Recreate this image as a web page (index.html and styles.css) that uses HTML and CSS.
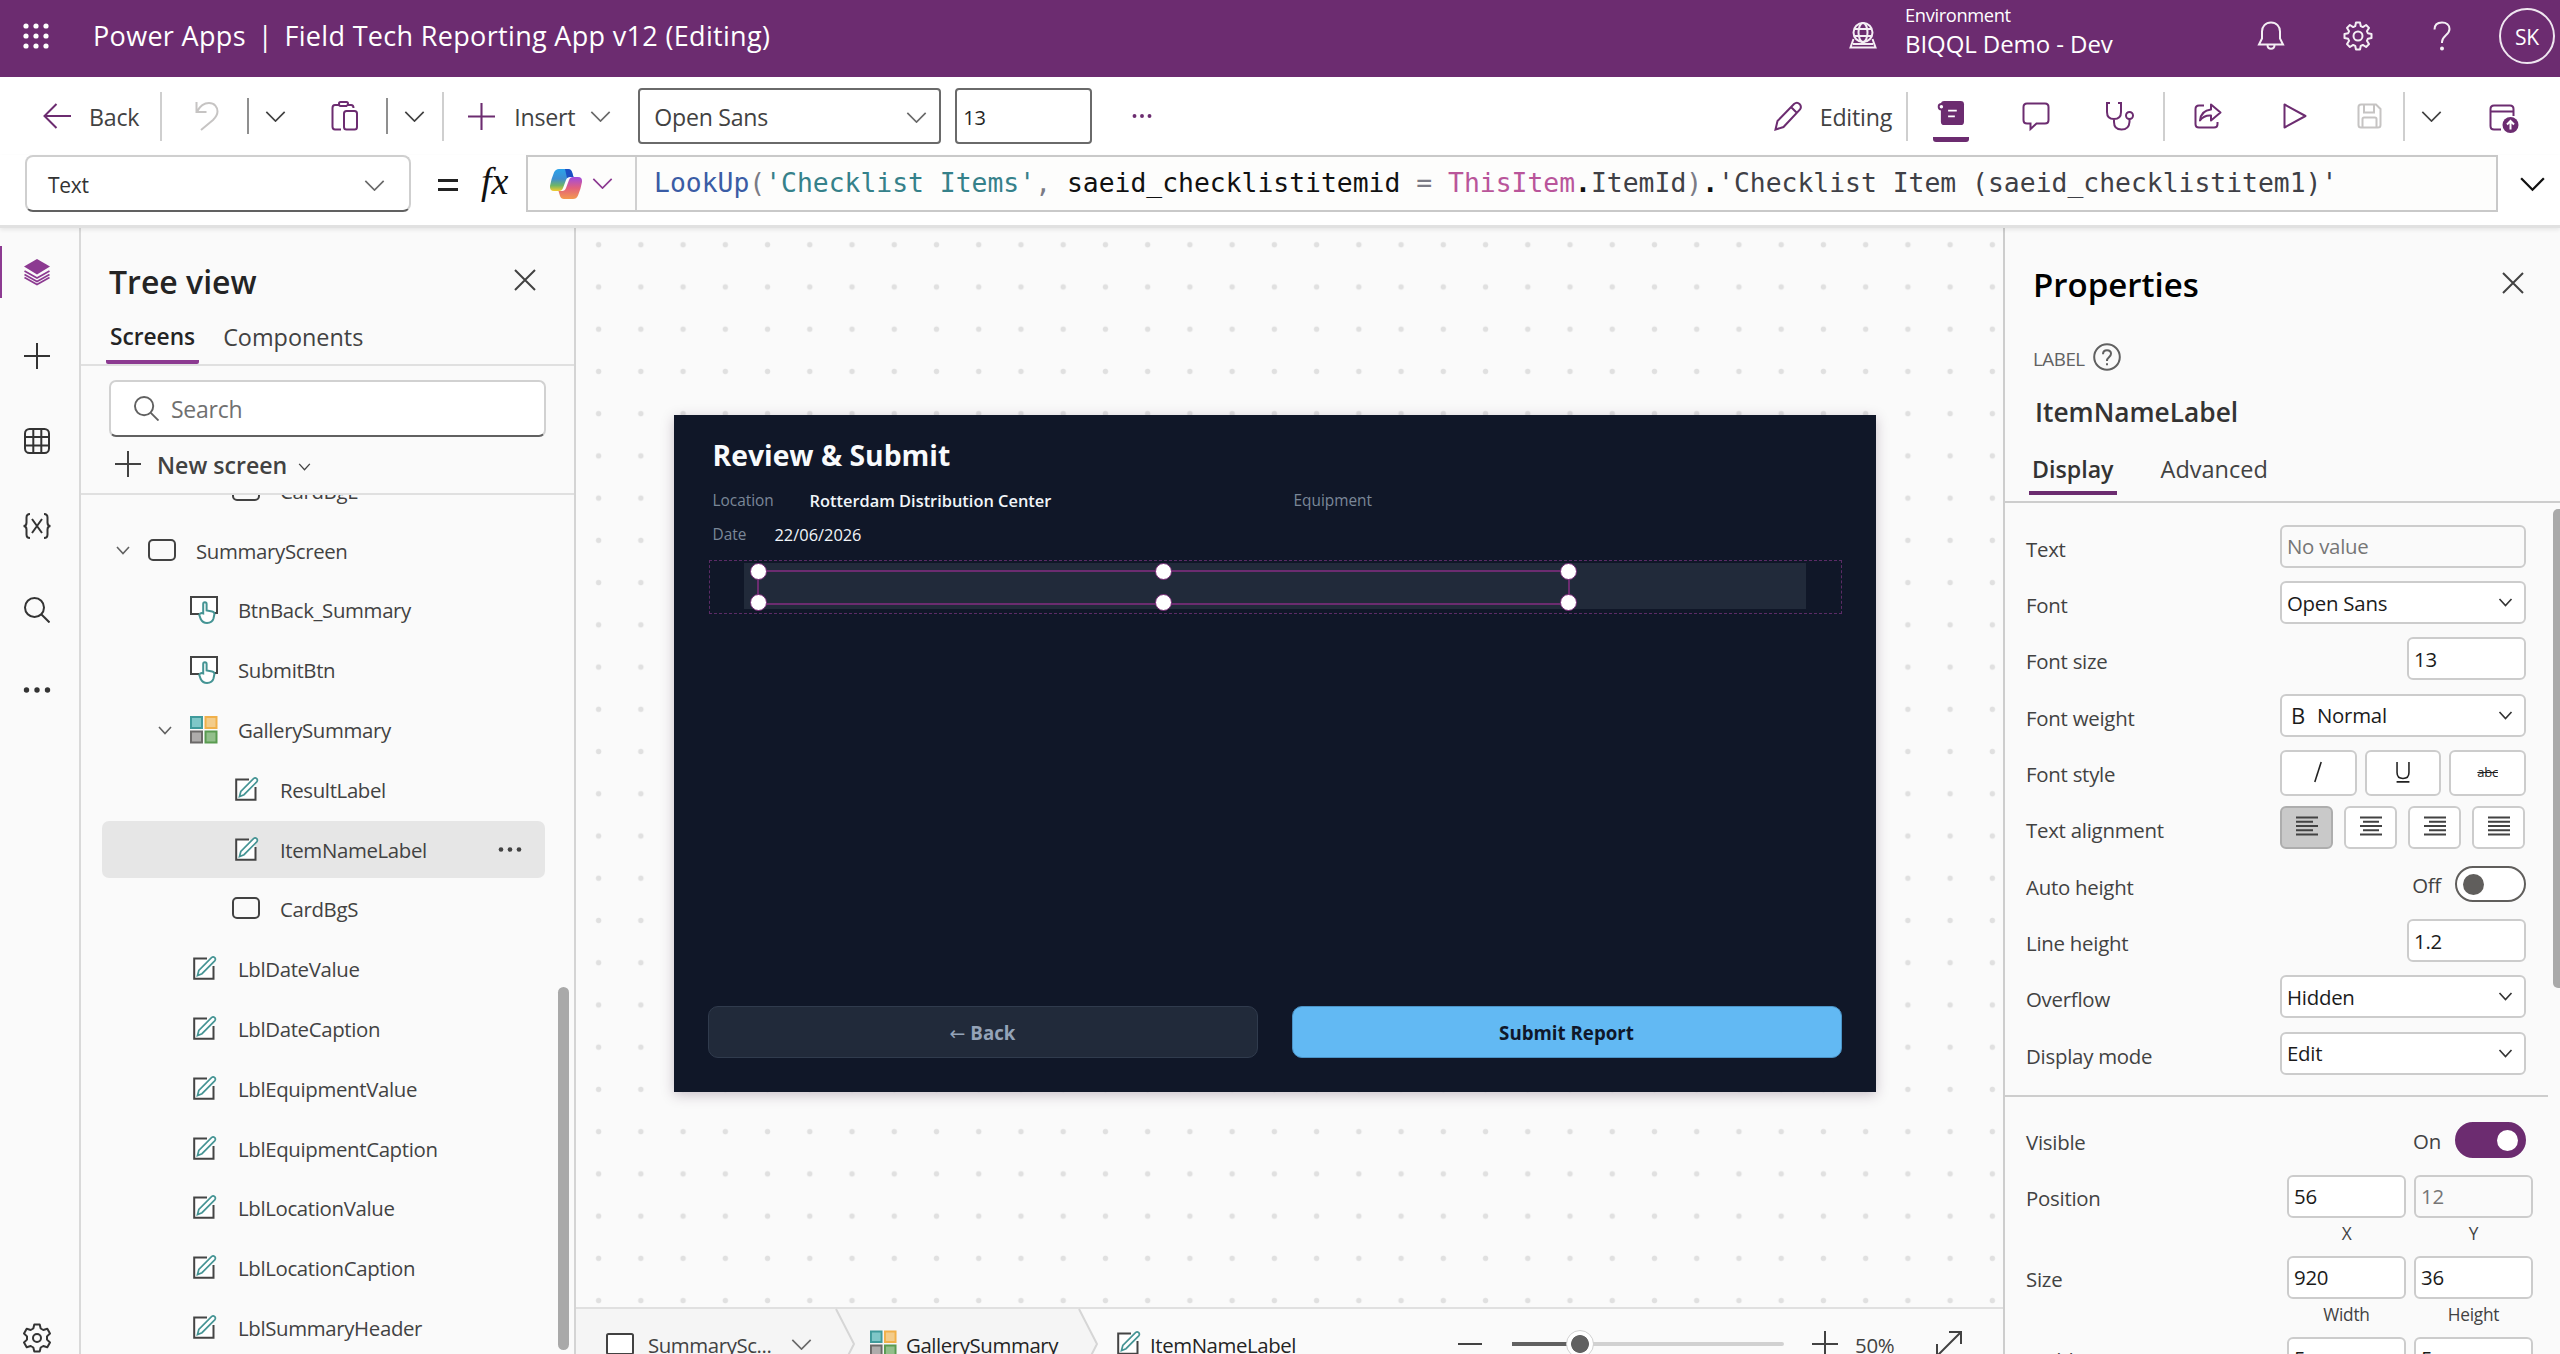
FILE: index.html
```html
<!DOCTYPE html>
<html lang="en">
<head>
  <meta charset="utf-8">
  <title>Power Apps | Field Tech Reporting App v12 (Editing)</title>
  <link rel="stylesheet" href="styles.css">
</head>
<body>

  <!-- shared icons -->
  <svg class="defs" width="0" height="0">
    <symbol id="chev" viewBox="0 0 22 12"><path d="M1 1l10 10L21 1"/></symbol>
    <symbol id="chev-sm" viewBox="0 0 14 9"><path d="M1 1l6 6.500L13 1"/></symbol>
    <symbol id="plus" viewBox="0 0 26 26"><path d="M13 0v26M0 13h26"/></symbol>
    <symbol id="close" viewBox="0 0 22 22"><path d="M1 1l20 20M21 1L1 21"/></symbol>
    <symbol id="search" viewBox="0 0 26 26"><circle cx="10.500" cy="10.500" r="9.500"/><path d="M17.500 17.500l8 8"/></symbol>
    <symbol id="dots" viewBox="0 0 28 8"><circle cx="3.500" cy="4" r="2.700"/><circle cx="14" cy="4" r="2.700"/><circle cx="24.500" cy="4" r="2.700"/></symbol>
    <symbol id="screen" viewBox="0 0 28 22"><rect x="1" y="1" width="26" height="20" rx="4"/></symbol>
    <symbol id="label" viewBox="0 0 24 24">
      <path d="M14 2.500H1.200V22.800H20.500V10" fill="#fff" stroke="#444"/>
      <path d="M4.500 19.500l1.300-5L18.500 1.600q1.700-1.300 3.200.1 1.400 1.500 0 3.200L9 17.700z" fill="#fff" stroke="#459494" stroke-width="1.700"/>
    </symbol>
    <symbol id="button" viewBox="0 0 28 28">
      <path d="M9 18H1V1h26v16h-3" fill="#fff" stroke="#444"/>
      <path d="M13.200 17.500V8q0-1.800 1.700-1.800T16.600 8v6.500l5.600 1q2.200.5 2.200 2.600l-.9 4.400q-1.200 4.300-6.500 4.500-4.300 0-6.300-4L9.300 19q.6-1.900 2.200-2z" fill="#fff" stroke="#459494"/>
    </symbol>
    <symbol id="gallery" viewBox="0 0 28 28">
      <path d="M1 1h11v11H1z" fill="#7fc7c8" stroke="#3f9a9b"/>
      <path d="M15.500 1h11v11h-11z" fill="#f3cc8a" stroke="#f0b04a"/>
      <path d="M1 15.500h11v11H1z" fill="#aeacab" stroke="#6b6968"/>
      <path d="M15.500 15.500h11v11h-11z" fill="#92bf8b" stroke="#599b50"/>
    </symbol>
    <symbol id="gear" viewBox="0 0 30 30">
      <path d="M12.300 1.500h5.400l1 4 2.600 1.500 4-1.200 2.700 4.700-3 2.900v3.200l3 2.900-2.700 4.700-4-1.200-2.600 1.500-1 4h-5.400l-1-4-2.600-1.500-4 1.200L2 19.500l3-2.900v-3.200l-3-2.900 2.700-4.700 4 1.200 2.600-1.500z" stroke-linejoin="round"/><circle cx="15" cy="15" r="4"/>
    </symbol>
    <symbol id="cog" viewBox="0 0 30 30">
      <path d="M13 1.500h4l.8 3.700 2 .9 3.300-2.100 2.900 2.900-2.100 3.300.9 2 3.700.8v4l-3.700.8-.9 2 2.100 3.300-2.900 2.900-3.300-2.100-2 .9-.8 3.700h-4l-.8-3.700-2-.9L6.900 26 4 23.100l2.100-3.300-.9-2L1.500 17v-4l3.700-.8.9-2L4 6.900 6.900 4l3.300 2.100 2-.9z" stroke-linejoin="round"/><circle cx="15" cy="15" r="4.500"/>
    </symbol>
  </svg>

  <header class="topbar">
    <svg class="waffle" viewBox="0 0 26 26">
      <circle cx="3" cy="3" r="2.600"/><circle cx="13" cy="3" r="2.600"/><circle cx="23" cy="3" r="2.600"/>
      <circle cx="3" cy="13" r="2.600"/><circle cx="13" cy="13" r="2.600"/><circle cx="23" cy="13" r="2.600"/>
      <circle cx="3" cy="23" r="2.600"/><circle cx="13" cy="23" r="2.600"/><circle cx="23" cy="23" r="2.600"/>
    </svg>
    <div class="brand">Power Apps</div>
    <div class="bar">|</div>
    <div class="brand">Field Tech Reporting App v12 (Editing)</div>
    <div class="spacer"></div>
    <svg class="ico w-globe" viewBox="0 0 28 27">
      <circle cx="14" cy="10.500" r="9.500"/><ellipse cx="14" cy="10.500" rx="4.500" ry="9.500"/><path d="M5 7h18M5 14h18M4.500 17L1.500 25.500h25L23.500 17M4 22h20"/>
    </svg>
    <div class="env">
      <div class="env-cap">Environment</div>
      <div class="env-name">BIQQL Demo - Dev</div>
    </div>
    <svg class="ico w-bell" viewBox="0 0 28 30"><path d="M14 1.500c-5.500 0-9 4-9 9v7L2 23.500h24l-3-6v-7c0-5-3.500-9-9-9zM10.500 24c0 5 7 5 7 0"/></svg>
    <svg class="ico w-cog"><use href="#cog"/></svg>
    <svg class="ico w-help" viewBox="0 0 18 30"><path d="M1.500 8.500C1.500 4 4.500 1.500 9 1.500s7.500 2.500 7.500 6.500c0 6-7.500 6.500-7.500 13v1"/><circle cx="9" cy="27.500" r="1"/></svg>
    <div class="avatar">SK</div>
  </header>

  <div class="toolbar">
    <svg class="ico purple w-back" viewBox="0 0 28 26"><path d="M28 13H1.500M13.500 1L1.500 13l12 12"/></svg>
    <span class="tb-text">Back</span>
    <i class="sep"></i>
    <svg class="ico faint w-undo" viewBox="0 0 24 30"><path d="M1.500 1v10h10M2 10.500C5 5 9 2 14 2c5.500 0 8.500 4 8.500 8.500 0 3.500-2 6-4.500 8.500L6 29"/></svg>
    <i class="sep short"></i>
    <svg class="ico chev c1"><use href="#chev"/></svg>
    <svg class="ico purple w-paste" viewBox="0 0 27 30"><path d="M8 4H4Q1.500 4 1.500 7v18.500q0 3 2.500 3h6M17 4h3q2.500 0 2.500 3M8 2.500q0-1.500 1.500-1.500h6Q17 1 17 2.500t-1.500 2.500h-6Q8 5 8 2.500z"/><rect x="13" y="10" width="13" height="18.500" rx="2.500"/></svg>
    <i class="sep short s2"></i>
    <svg class="ico chev c2"><use href="#chev"/></svg>
    <i class="sep s3"></i>
    <svg class="ico purple w-plus"><use href="#plus"/></svg>
    <span class="tb-text">Insert</span>
    <svg class="ico chev grey c3"><use href="#chev"/></svg>
    <div class="tb-box font-box"><span>Open Sans</span><svg class="ico chev grey"><use href="#chev"/></svg></div>
    <div class="tb-box size-box">13</div>
    <svg class="purple-fill w-more"><use href="#dots"/></svg>
    <div class="spacer"></div>
    <svg class="ico purple w-pencil" viewBox="0 0 28 30"><path d="M1.500 28.500l2-8.500L20 3q3-2.500 5.500 0t.5 5.500L9.500 26zM17 6l6 6"/></svg>
    <span class="tb-text">Editing</span>
    <i class="sep e1"></i>
    <div class="active-tool">
      <svg viewBox="0 0 28 27"><rect class="solid" x="3.500" y="1" width="24" height="25" rx="3.500"/><circle class="ring" cx="4" cy="7" r="2.800"/><path class="cut" d="M11 11h9M11 17h7"/></svg>
    </div>
    <svg class="ico purple w-comment" viewBox="0 0 28 28"><path d="M5 1.500h18q3.500 0 3.500 3.500v13q0 3.500-3.500 3.500h-8.500L8.500 27v-5.500H5q-3.500 0-3.500-3.500V5q0-3.500 3.500-3.500z"/></svg>
    <svg class="ico purple w-steth" viewBox="0 0 30 29"><path d="M5 1H2v9q0 7 7 7t7-7V1h-3M9 17v3q0 7.500 7.500 7.500T24.500 20v-3"/><circle cx="24.500" cy="13.500" r="3.500"/></svg>
    <i class="sep e2"></i>
    <svg class="ico purple w-share" viewBox="0 0 28 26"><path d="M10 2.500H5Q1.500 2.500 1.500 6v15q0 3.500 3.500 3.500h15q3.500 0 3.500-3.500v-2M17 1.500l9.500 8-9.500 8v-5q-7-.5-11 5 1-10 11-11z" stroke-linejoin="round"/></svg>
    <svg class="ico purple w-play" viewBox="0 0 24 26"><path d="M1.500 1.500v23L22.500 13z" stroke-linejoin="round"/></svg>
    <svg class="ico faint w-save" viewBox="0 0 25 26"><path d="M4 1.500h15l4.500 4.500v16q0 2.500-2.500 2.500H4Q1.500 24.500 1.500 22V4Q1.500 1.500 4 1.500zM7 1.500v8h10v-8M5.500 24V16q0-1.500 1.500-1.500h11q1.500 0 1.500 1.500v8"/></svg>
    <i class="sep e3"></i>
    <svg class="ico chev c4"><use href="#chev"/></svg>
    <svg class="ico purple w-publish" viewBox="0 0 30 29"><path d="M12 25.500H5Q1.500 25.500 1.500 22V5Q1.500 1.500 5 1.500h16q3.500 0 3.500 3.500v7M1.500 7.500h23"/><circle class="solid" cx="21.500" cy="21" r="8"/><path class="cut" d="M21.500 25.500v-8.500M18 20.500l3.500-3.500 3.500 3.500"/></svg>
  </div>

  <div class="formula">
    <div class="prop-select"><span>Text</span><svg class="ico chev grey"><use href="#chev"/></svg></div>
    <svg class="equals" viewBox="0 0 20 14"><path d="M0 2.500h20M0 11.500h20"/></svg>
    <span class="fx">fx</span>
    <div class="fbox">
      <div class="copilot">
        <svg class="copilot-logo" viewBox="0 0 32 30">
          <defs>
            <linearGradient id="ga" x1="0" y1="0" x2="0" y2="1"><stop offset="0" stop-color="#2aa3ea"/><stop offset=".45" stop-color="#3f8ed0"/><stop offset=".75" stop-color="#6fb567"/><stop offset="1" stop-color="#f4cb2e"/></linearGradient>
            <linearGradient id="gb" x1="0" y1="0" x2="0" y2="1"><stop offset="0" stop-color="#a04be0"/><stop offset=".5" stop-color="#e2607d"/><stop offset="1" stop-color="#f39a4e"/></linearGradient>
          </defs>
          <path d="M9 0h9q3 0 4 3l1.500 5H20q-3 0-4 3l-3 8q-1 3-4 3H4q-4.500 0-4-5Q1.500 9 4 3.500 5.500 0 9 0z" fill="url(#ga)"/>
          <path d="M15 0h3q3 0 4 3l1.500 5H20q-2 0-3 1z" fill="#1d4fc4"/>
          <path d="M23 30h-9q-3 0-4-3l-1.500-5H12q3 0 4-3l3-8q1-3 4-3h5q4.500 0 4 5-1.500 8-4 13.500Q26.500 30 23 30z" fill="url(#gb)"/>
        </svg>
        <svg class="ico chev violet"><use href="#chev"/></svg>
      </div>
      <code><span class="fn">LookUp</span><span class="pn">(</span><span class="str">'Checklist Items'</span><span class="pn">,</span> <span class="id">saeid_checklistitemid</span> <span class="pn">=</span> <span class="kw">ThisItem</span><b>.</b>ItemId<span class="pn">)</span><b>.</b>'Checklist Item (saeid_checklistitem1)'</code>
    </div>
    <svg class="ico expand" viewBox="0 0 22 12"><path d="M1 1l10 10L21 1"/></svg>
  </div>

  <main class="work">

    <nav class="rail">
      <div class="rail-item on"><svg viewBox="0 0 26 26"><path class="solid" d="M13 0l13 7.500L13 15.500 0 7.500z"/><path d="M.5 12L13 19l12.500-7M.5 15.500L13 22.500l12.500-7M.5 18.500L13 25.500l12.500-7"/></svg></div>
      <div class="rail-item"><svg><use href="#plus"/></svg></div>
      <div class="rail-item"><svg viewBox="0 0 26 26"><rect x="1" y="1" width="24" height="24" rx="4.500"/><path d="M9.300 1v24M17.300 1v24M1 9h24M1 17.500h24"/></svg></div>
      <div class="rail-item"><svg class="vars" viewBox="0 0 28 26"><path d="M7 1Q3.500 1 3.500 4.500v5Q3.500 13 .5 13q3 0 3 3.500v5Q3.500 25 7 25M21 1q3.500 0 3.500 3.500v5q0 3.500 3 3.500-3 0-3 3.500v5Q24.500 25 21 25M9 6l10 14M19 6L9 20"/></svg></div>
      <div class="rail-item"><svg><use href="#search"/></svg></div>
      <div class="rail-item rail-dots"><svg><use href="#dots"/></svg></div>
      <div class="rail-gear"><svg><use href="#gear"/></svg></div>
    </nav>

    <section class="tree">
      <div class="tree-title"><h2>Tree view</h2><svg class="ico w-close"><use href="#close"/></svg></div>
      <div class="tabs"><span class="tab on">Screens</span><span class="tab">Components</span></div>
      <div class="search"><svg class="ico"><use href="#search"/></svg><span>Search</span></div>
      <div class="new-screen"><svg class="ico"><use href="#plus"/></svg><span>New screen</span><svg class="ico sm"><use href="#chev-sm"/></svg></div>
      <div class="tree-list">
        <div class="node l2 first"><svg class="i-screen"><use href="#screen"/></svg>CardBgE</div>
        <div class="node l0"><svg class="tw"><use href="#chev-sm"/></svg><svg class="i-screen"><use href="#screen"/></svg>SummaryScreen</div>
        <div class="node l1"><svg class="i-28"><use href="#button"/></svg>BtnBack_Summary</div>
        <div class="node l1"><svg class="i-28"><use href="#button"/></svg>SubmitBtn</div>
        <div class="node l1"><svg class="tw"><use href="#chev-sm"/></svg><svg class="i-28"><use href="#gallery"/></svg>GallerySummary</div>
        <div class="node l2"><svg class="i-label"><use href="#label"/></svg>ResultLabel</div>
        <div class="node l2 selected"><svg class="i-label"><use href="#label"/></svg>ItemNameLabel<svg class="node-more"><use href="#dots"/></svg></div>
        <div class="node l2"><svg class="i-screen"><use href="#screen"/></svg>CardBgS</div>
        <div class="node l1"><svg class="i-label"><use href="#label"/></svg>LblDateValue</div>
        <div class="node l1"><svg class="i-label"><use href="#label"/></svg>LblDateCaption</div>
        <div class="node l1"><svg class="i-label"><use href="#label"/></svg>LblEquipmentValue</div>
        <div class="node l1"><svg class="i-label"><use href="#label"/></svg>LblEquipmentCaption</div>
        <div class="node l1"><svg class="i-label"><use href="#label"/></svg>LblLocationValue</div>
        <div class="node l1"><svg class="i-label"><use href="#label"/></svg>LblLocationCaption</div>
        <div class="node l1"><svg class="i-label"><use href="#label"/></svg>LblSummaryHeader</div>
        <div class="tree-scroll"></div>
      </div>
    </section>

    <section class="stage">
      <div class="canvas">
        <div class="app">
          <div class="a-title">Review &amp; Submit</div>
          <div class="a-cap loc-cap">Location</div>
          <div class="a-val loc-val">Rotterdam Distribution Center</div>
          <div class="a-cap eq-cap">Equipment</div>
          <div class="a-cap date-cap">Date</div>
          <div class="a-val date-val">22/06/2026</div>
          <div class="card"></div>
          <div class="gallery"></div>
          <div class="selection">
            <i class="h tl"></i><i class="h tc"></i><i class="h tr"></i>
            <i class="h bl"></i><i class="h bc"></i><i class="h br"></i>
          </div>
          <div class="a-btn back"><span class="larr">←</span> Back</div>
          <div class="a-btn submit">Submit Report</div>
        </div>
      </div>
      <footer class="status">
        <div class="crumb c-screen"><svg class="i-box" viewBox="0 0 28 22"><rect x="1" y="1" width="26" height="20" rx="1.500"/></svg><span>SummarySc...</span><svg class="ico chev grey"><use href="#chev"/></svg></div>
        <svg class="arrow mid" viewBox="0 0 20 70"><path d="M1 0l18 35L1 70"/></svg>
        <div class="crumb c-gallery"><svg class="i-28"><use href="#gallery"/></svg><span>GallerySummary</span></div>
        <svg class="arrow" viewBox="0 0 20 70"><path class="bg" d="M0 0h1l18 35L1 70H0z"/><path d="M1 0l18 35L1 70"/></svg>
        <div class="crumb c-item"><svg class="i-label"><use href="#label"/></svg><span>ItemNameLabel</span></div>
        <div class="spacer"></div>
        <div class="zoom">
          <i class="minus"></i>
          <div class="track"><div class="fill"></div><div class="thumb"></div></div>
          <svg class="ico"><use href="#plus"/></svg>
          <span>50%</span>
          <svg class="ico fit" viewBox="0 0 26 26"><path d="M1 25L25 1M13 1h12v12M1 13v12h12"/></svg>
        </div>
      </footer>
    </section>

    <aside class="props">
      <div class="p-title"><h2>Properties</h2><svg class="ico w-close"><use href="#close"/></svg></div>
      <div class="p-kind"><span>LABEL</span><svg class="ico" viewBox="0 0 28 28"><circle cx="14" cy="14" r="12.800"/><path d="M10 11.200q0-4 4-4t4 3.600c0 3.200-4 3.600-4 6.700v.5M14 20.300v2"/></svg></div>
      <div class="p-name">ItemNameLabel</div>
      <div class="p-tabs"><span class="p-tab on">Display</span><span class="p-tab">Advanced</span></div>
      <div class="p-body">
        <div class="row"><label>Text</label><div class="ctl wide off">No value</div></div>
        <div class="row"><label>Font</label><div class="ctl wide">Open Sans<svg><use href="#chev-sm"/></svg></div></div>
        <div class="row"><label>Font size</label><div class="ctl num">13</div></div>
        <div class="row"><label>Font weight</label><div class="ctl wide"><b class="bold-b">B</b>Normal<svg><use href="#chev-sm"/></svg></div></div>
        <div class="row"><label>Font style</label>
          <div class="styles">
            <div class="sbtn"><svg viewBox="0 0 24 24"><path d="M8.500 23L15.500 1"/></svg></div>
            <div class="sbtn"><svg viewBox="0 0 24 24"><path d="M5.500 1v11.500q0 6.500 6.500 6.500t6.500-6.500V1M5 22.800h14"/></svg></div>
            <div class="sbtn"><s>abc</s></div>
          </div>
        </div>
        <div class="row"><label>Text alignment</label>
          <div class="aligns">
            <div class="abtn on"><svg viewBox="0 0 22 20"><path d="M0 1.500h22M0 5.800h17M0 10h22M0 14.200h17M0 18.500h22"/></svg></div>
            <div class="abtn"><svg viewBox="0 0 22 20"><path d="M0 1.500h22M3 5.800h16M0 10h22M3 14.200h16M0 18.500h22"/></svg></div>
            <div class="abtn"><svg viewBox="0 0 22 20"><path d="M0 1.500h22M5 5.800h17M0 10h22M5 14.200h17M0 18.500h22"/></svg></div>
            <div class="abtn"><svg viewBox="0 0 22 20"><path d="M0 1.500h22M0 5.800h22M0 10h22M0 14.200h22M0 18.500h22"/></svg></div>
          </div>
        </div>
        <div class="row"><label>Auto height</label><span class="t-text">Off</span><div class="toggle"></div></div>
        <div class="row"><label>Line height</label><div class="ctl num">1.2</div></div>
        <div class="row"><label>Overflow</label><div class="ctl wide">Hidden<svg><use href="#chev-sm"/></svg></div></div>
        <div class="row"><label>Display mode</label><div class="ctl wide">Edit<svg><use href="#chev-sm"/></svg></div></div>
        <hr>
        <div class="row"><label>Visible</label><span class="t-text">On</span><div class="toggle on"></div></div>
        <div class="row pair"><label>Position</label>
          <div class="cell"><div class="ctl num">56</div><small>X</small></div>
          <div class="cell"><div class="ctl num off">12</div><small>Y</small></div>
        </div>
        <div class="row pair"><label>Size</label>
          <div class="cell"><div class="ctl num">920</div><small>Width</small></div>
          <div class="cell"><div class="ctl num">36</div><small>Height</small></div>
        </div>
        <div class="row pair"><label>Padding</label>
          <div class="cell"><div class="ctl num">5</div></div>
          <div class="cell"><div class="ctl num">5</div></div>
        </div>
        <div class="p-scroll"></div>
      </div>
    </aside>

  </main>

</body>
</html>
```
FILE: styles.css
```css
* {
  box-sizing: border-box;
}
body {
  margin: 0;
  width: 2560px;
  height: 1354px;
  overflow: hidden;
  display: flex;
  flex-direction: column;
  font-family: "Open Sans", "Noto Sans", sans-serif;
  font-size: 20.4px;
  letter-spacing: -0.012em;
  color: #424242;
  background-color: #fff;
}
h2 {
  margin: 0;
}
svg {
  flex: none;
  overflow: visible;
  fill: none;
  stroke: #424242;
  stroke-width: 2;
}
.defs {
  position: absolute;
}
.spacer {
  flex: 1;
}
.ico { stroke: #424242; }
.ico.purple { stroke: #6c2c70; }
.ico.faint { stroke: #c6c4c3; }
.ico.grey { stroke: #6a6a6a; }
.ico.violet { stroke: #8c3a91; }
.chev {
  width: 21px;
  height: 11px;
  stroke-width: 1.8;
}

/* top bar */
.topbar {
  flex: none;
  height: 77px;
  padding: 0 5px 6px 23px;
  display: flex;
  align-items: center;
  background-color: #6c2c70;
  color: #fff;
}
.topbar .ico {
  stroke: #f4eef4;
}
.waffle {
  width: 26px;
  height: 26px;
  fill: #fff;
  stroke: none;
  margin-right: 44px;
}
.brand {
  font-size: 27px;
  font-weight: 500;
  letter-spacing: 0.012em;
}
.bar {
  font-size: 27px;
  margin: 0 12px 0 12px;
}
.w-globe {
  width: 28px;
  height: 27px;
  margin-right: 28px;
}
.env {
  width: 352px;
  align-self: flex-start;
}
.env-cap {
  font-size: 18.3px;
  line-height: 30px;
  letter-spacing: -0.02em;
}
.env-name {
  font-size: 24px;
  line-height: 28px;
  letter-spacing: -0.003em;
}
.w-bell { width: 28px; height: 30px; margin-right: 58px; }
.w-cog { width: 30px; height: 30px; margin-right: 60px; }
.w-help { width: 18px; height: 30px; margin-right: 48px; }
.avatar {
  width: 56px;
  height: 56px;
  border: 2px solid #efe6f0;
  border-radius: 50%;
  text-align: center;
  line-height: 55px;
  font-size: 21px;
}

/* command bar */
.toolbar {
  flex: none;
  height: 78px;
  padding-left: 43px;
  padding-right: 41px;
  display: flex;
  align-items: center;
}
.tb-text {
  font-size: 23.2px;
  letter-spacing: -0.01em;
  line-height: 32px;
  padding-top: 2px;
}
.sep {
  width: 2px;
  height: 49px;
  background-color: #cfcfcf;
  margin-left: 21px;
}
.sep.short {
  height: 36px;
  background-color: #8f8f8f;
  margin-left: 28px;
}
.w-back { width: 28px; height: 26px; margin-right: 18px; }
.w-undo { width: 24px; height: 30px; margin-left: 33px; }
.c1 { margin-left: 16px; }
.w-paste { width: 27px; height: 30px; margin-left: 45px; }
.toolbar .c2 { margin-left: 16px; }
.toolbar .s3 { margin-left: 17px; }
.w-plus { width: 27px; height: 27px; margin: 0 19px 0 24px; }
.c3 { margin-left: 15px; }
.tb-box {
  height: 56px;
  border: 2px solid #6a6a6a;
  border-radius: 4px;
  display: flex;
  align-items: center;
  justify-content: space-between;
}
.font-box {
  width: 303px;
  margin-left: 27px;
  padding: 2px 12px 0 14px;
  font-size: 23.1px;
}
.size-box {
  width: 137px;
  margin-left: 14px;
  padding: 2px 0 0 6px;
  font-size: 20px;
  color: #242424;
}
.w-more {
  width: 20px;
  height: 6px;
  margin-left: 40px;
  fill: #6c2c70;
  stroke: none;
}
.w-pencil { width: 28px; height: 30px; margin-right: 18px; }
.e1 { margin-left: 14px; }
.active-tool {
  width: 36px;
  height: 42px;
  margin-left: 25px;
  margin-top: 10px;
  border-bottom: 5px solid #6c2c70;
  border-radius: 3px;
}
.active-tool svg {
  display: block;
  width: 28px;
  height: 26px;
  margin: 0 auto;
  stroke: #6c2c70;
}
.solid { fill: #6c2c70; stroke: none; }
.cut { stroke: #fff; }
.ring { fill: #fff; }
.w-comment { width: 28px; height: 28px; margin-left: 53px; }
.w-steth { width: 30px; height: 29px; margin-left: 55px; }
.e2 { margin-left: 28px; }
.w-share { width: 28px; height: 26px; margin-left: 29px; }
.w-play { width: 24px; height: 26px; margin-left: 61px; }
.w-save { width: 25px; height: 26px; margin-left: 50px; }
.c4 { margin-left: 16px; }
.w-publish { width: 30px; height: 29px; margin-left: 47px; margin-top: 4px; }

/* formula bar */
.formula {
  flex: none;
  position: relative;
  z-index: 2;
  height: 73px;
  padding-left: 25px;
  display: flex;
  align-items: flex-start;
  border-bottom: 3px solid #e1e1e1;
  box-shadow: 0 2px 4px rgba(0, 0, 0, 0.08);
  background-color: #fff;
}
.prop-select {
  width: 386px;
  height: 57px;
  padding: 3px 24px 0 21px;
  display: flex;
  align-items: center;
  justify-content: space-between;
  border: 2px solid #cfcfcf;
  border-bottom-color: #616161;
  border-radius: 8px;
  font-size: 21px;
  color: #333;
}
.equals {
  width: 20px;
  height: 14px;
  margin: 23px 23px 0 27px;
  stroke: #222;
  stroke-width: 3;
}
.fx {
  width: 45px;
  font: italic 38px/52px "Liberation Serif", serif;
  letter-spacing: 0;
  color: #111;
}
.fbox {
  width: 1972px;
  height: 57px;
  display: flex;
  align-items: stretch;
  border: 2px solid #c9c9c9;
  background-color: #fdfdfc;
}
.copilot {
  width: 109px;
  padding-left: 22px;
  display: flex;
  align-items: center;
  gap: 10px;
  border-right: 2px solid #d0d0d0;
}
.copilot-logo {
  width: 32px;
  height: 30px;
  stroke: none;
}
code {
  padding-left: 17px;
  font: 26.38px/52px "DejaVu Sans Mono", monospace;
  letter-spacing: 0;
  white-space: pre;
  color: #3f4046;
}
.fn { color: #3a5ca5; }
.str { color: #35818a; }
.pn { color: #7b7b85; }
.id { color: #111; }
.kw { color: #b9559a; }
code b { color: #111; }
.expand {
  width: 25px;
  height: 14px;
  margin: 22px 0 0 22px;
  stroke: #111;
}

.work {
  flex: 1;
  min-height: 0;
  display: flex;
  background-color: #fafafa;
}

/* left rail */
.rail {
  position: relative;
  width: 81px;
  padding-top: 3px;
  border-right: 2px solid #d9d9d9;
}
.rail-item {
  height: 84.7px;
  padding-right: 5px;
  display: flex;
  align-items: center;
  justify-content: center;
}
.rail-item svg {
  width: 26px;
  height: 26px;
  stroke: #333;
}
.rail-item svg.vars {
  width: 28px;
}
.rail-item.on {
  box-shadow: inset 2px 0 #8c3a91;
  height: 52px;
  margin: 15px 0 16px;
}
.rail-item.on svg {
  stroke: #8c3a91;
  stroke-width: 1.7;
}
.rail-item.on .solid {
  fill: #8c3a91;
}
.rail-dots {
  height: 74px;
}
.rail-dots svg {
  width: 28px;
  height: 8px;
  fill: #333;
  stroke: none;
}
.rail-gear {
  position: absolute;
  left: 22px;
  bottom: 0;
  height: 31px;
}
.rail-gear svg {
  width: 30px;
  height: 30px;
  stroke: #333;
}

/* tree view */
.tree {
  width: 495px;
  display: flex;
  flex-direction: column;
  border-right: 2px solid #d4d4d4;
}
.tree-title {
  height: 81px;
  padding: 26px 38px 0 28px;
  display: flex;
  align-items: center;
  justify-content: space-between;
  color: #242424;
}
.tree-title h2 {
  font-size: 32px;
  font-weight: 600;
  letter-spacing: 0;
}
.w-close {
  width: 22px;
  height: 22px;
  margin-top: -3px;
}
.tabs {
  height: 57px;
  padding-left: 25px;
  display: flex;
  gap: 20px;
  border-bottom: 2px solid #e0e0e0;
}
.tab {
  padding: 10px 4px 0;
  font-size: 23.4px;
  line-height: 36px;
  letter-spacing: 0;
}
.tab.on {
  height: 55px;
  font-size: 22.7px;
  font-weight: 600;
  color: #242424;
  border-bottom: 4px solid #8c3a91;
  border-radius: 2px;
}
.search {
  flex: none;
  width: 437px;
  height: 57px;
  margin: 14px 0 0 28px;
  padding-left: 23px;
  display: flex;
  align-items: center;
  gap: 12px;
  border: 2px solid #d1d1d1;
  border-bottom-color: #616161;
  border-radius: 7px;
  background-color: #fff;
  font-size: 23px;
  color: #707070;
}
.search svg {
  width: 25px;
  height: 25px;
  stroke: #616161;
}
.new-screen {
  flex: none;
  height: 58px;
  padding-left: 34px;
  display: flex;
  align-items: center;
  font-size: 23.1px;
  font-weight: 600;
  letter-spacing: 0;
  border-bottom: 2px solid #e0e0e0;
}
.new-screen svg {
  width: 26px;
  height: 26px;
  margin: -2px 16px 0 0;
}
.new-screen svg.sm {
  width: 13px;
  height: 8px;
  margin: 3px 0 0 11px;
  stroke-width: 1.5;
}
.tree-list {
  position: relative;
  flex: 1;
  min-height: 0;
  overflow: hidden;
}
.node {
  height: 59.8px;
  margin: 0 29px 0 21px;
  display: flex;
  align-items: center;
  letter-spacing: -0.017em;
}
.node.first {
  margin-top: -34px;
}
.node svg {
  flex: none;
}
.l0 { padding-left: 14px; }
.l1 { padding-left: 88px; }
.l2 { padding-left: 130px; }
.node .tw {
  width: 14px;
  height: 9px;
  stroke: #616161;
  stroke-width: 1.6;
}
.l0 .tw { margin-right: 18px; }
.l1 .tw { margin: 0 18px 0 -32px; }
.i-screen {
  width: 28px;
  height: 22px;
  margin: -2px 20px 0 0;
}
.i-28 {
  width: 28px;
  height: 28px;
  margin: -1px 20px 0 0;
}
.i-label {
  width: 24px;
  height: 24px;
  margin: -2px 21px 0 3px;
}
.node.selected {
  height: 57px;
  margin-top: 1.4px;
  margin-bottom: 1.4px;
  border-radius: 7px;
  background-color: #e6e6e6;
}
.node .node-more {
  width: 24px;
  height: 7px;
  margin-left: auto;
  margin-right: 23px;
  fill: #424242;
  stroke: none;
}
.tree-scroll {
  position: absolute;
  right: 5px;
  top: 492px;
  width: 11px;
  height: 363px;
  border-radius: 6px;
  background-color: #a9a9a9;
}

/* canvas */
.stage {
  flex: 1;
  display: flex;
  flex-direction: column;
}
.canvas {
  position: relative;
  flex: none;
  height: 1079px;
  background-color: #fafafa;
  background-image: radial-gradient(circle at center, #e0e0e0 2.2px, transparent 3.2px);
  background-size: 42.24px 42.24px;
  background-position: 1.5px -4.400px;
}
.app {
  position: absolute;
  left: 97.500px;
  top: 187px;
  width: 1202.500px;
  height: 677px;
  background-color: #101728;
  box-shadow: 0 3px 12px rgba(60, 30, 60, 0.26);
}
.app > div {
  position: absolute;
  white-space: nowrap;
}
.a-title {
  left: 39px;
  top: 20px;
  font-size: 28.3px;
  line-height: 40px;
  font-weight: 700;
  letter-spacing: 0;
  color: #f8fafc;
}
.a-cap, .a-val {
  line-height: 20px;
  letter-spacing: 0;
}
.a-cap {
  font-size: 15.4px;
  color: #7b8798;
}
.a-val {
  font-size: 16.4px;
  color: #f1f5f9;
}
.loc-cap { left: 39px; top: 76px; }
.loc-val { left: 136px; top: 76px; font-weight: 600; }
.eq-cap { left: 620px; top: 76px; }
.date-cap { left: 39px; top: 110px; }
.date-val { left: 101px; top: 110px; }
.app .card {
  left: 70px;
  top: 147.500px;
  width: 1062px;
  height: 46px;
  background-color: #212a3a;
}
.app .gallery {
  left: 35px;
  top: 145px;
  width: 1133px;
  height: 54px;
  border: 1px dashed #5b2b66;
}
.app .selection {
  left: 83px;
  top: 155px;
  width: 813px;
  height: 35px;
  border: 2px solid #6c2c70;
}
.h {
  position: absolute;
  width: 17px;
  height: 17px;
  border: 1.500px solid #742774;
  border-radius: 50%;
  background-color: #fff;
}
.tl, .tc, .tr { top: -9px; }
.bl, .bc, .br { bottom: -8px; }
.tl, .bl { left: -9px; }
.tc, .bc { left: 396px; }
.tr, .br { right: -9px; }
.a-btn {
  top: 591px;
  width: 550px;
  height: 52px;
  border-radius: 10px;
  text-align: center;
  font-size: 18.7px;
  line-height: 51px;
  font-weight: 700;
  letter-spacing: 0;
}
.larr {
  font-family: "DejaVu Sans", sans-serif;
  font-weight: 400;
  font-size: 19px;
}
.back {
  left: 34px;
  background-color: #212a3a;
  border: 1px solid #303b4d;
  color: #94a3b8;
}
.submit {
  left: 618px;
  background-color: #62b9f3;
  border: 1px solid #4b93c6;
  color: #0f172a;
}

/* status bar */
.status {
  flex: none;
  height: 72px;
  display: flex;
  align-items: center;
  border-top: 2px solid #e0e0e0;
}
.crumb {
  height: 70px;
  display: flex;
  align-items: center;
  background-color: #f5f5f5;
}
.crumb .i-box {
  width: 28px;
  height: 22px;
  margin-right: 14px;
  fill: #fff;
}
.c-screen { width: 259px; padding-left: 30px; }
.c-screen span { width: 143px; }
.c-gallery { width: 223px; padding-left: 15px; color: #242424; }
.c-gallery .i-28 { margin-right: 9px; width: 27px; }
.c-item { background: none; padding-left: 16px; color: #242424; }
.c-item .i-label { margin-right: 9px; }
.crumb span {
  padding-top: 2px;
  letter-spacing: -0.02em;
}
.arrow {
  width: 20px;
  height: 70px;
  stroke: #d6d6d6;
}
.arrow.mid {
  background-color: #f5f5f5;
}
.arrow .bg {
  fill: #f5f5f5;
  stroke: none;
}
.zoom {
  display: flex;
  align-items: center;
  padding-right: 41px;
}
.minus {
  width: 24px;
  height: 2px;
  margin-right: 30px;
  background-color: #424242;
}
.track {
  position: relative;
  width: 272px;
  height: 4px;
  margin-right: 28px;
  border-radius: 2px;
  background-color: #d1d1d1;
}
.fill {
  width: 68px;
  height: 4px;
  background-color: #616161;
}
.thumb {
  position: absolute;
  left: 54px;
  top: -12px;
  width: 28px;
  height: 28px;
  border: 1.500px solid #d1d1d1;
  border-radius: 50%;
  background: radial-gradient(circle, #616161 8.500px, #fff 9.300px);
}
.zoom .ico {
  width: 26px;
  height: 26px;
}
.zoom span {
  width: 42px;
  margin: 1px 39px 0 17px;
}

/* properties */
.props {
  width: 557px;
  flex: none;
  border-left: 2px solid #cdcdcd;
}
.p-title {
  height: 82px;
  padding: 30px 36px 0 28px;
  display: flex;
  align-items: center;
  justify-content: space-between;
  color: #000;
}
.p-title h2 {
  font-size: 33px;
  font-weight: 600;
  letter-spacing: 0;
}
.p-kind {
  height: 78px;
  padding: 19px 0 0 28px;
  display: flex;
  align-items: center;
  gap: 8px;
  font-size: 18.8px;
  letter-spacing: -0.025em;
  color: #616161;
}
.p-kind svg {
  width: 28px;
  height: 28px;
  margin-top: -4px;
  stroke: #616161;
}
.p-name {
  height: 50px;
  padding-left: 30px;
  font-size: 26.3px;
  line-height: 48px;
  font-weight: 600;
  letter-spacing: 0;
  color: #333;
}
.p-tabs {
  height: 65px;
  padding-left: 24px;
  display: flex;
  gap: 41px;
  border-bottom: 2px solid #cdcdcd;
}
.p-tab {
  height: 57px;
  padding: 15px 3px 0;
  font-size: 23.5px;
  line-height: 33px;
  letter-spacing: 0;
}
.p-tab.on {
  font-size: 23.2px;
  font-weight: 600;
  color: #333;
  border-bottom: 4px solid #6c2c70;
}
.p-body {
  position: relative;
  padding: 15px 34px 0 21px;
}
.row {
  height: 56.35px;
  display: flex;
  align-items: center;
}
.row label {
  flex: 1;
  padding-top: 5px;
}
.ctl {
  height: 43px;
  padding: 0 11px 0 5px;
  display: flex;
  align-items: center;
  border: 2px solid #cccccc;
  border-radius: 6px;
  background-color: #fff;
  color: #1b1b1b;
}
.ctl svg {
  width: 15px;
  height: 9px;
  margin-left: auto;
  stroke: #333;
  stroke-width: 1.6;
}
.wide { width: 246px; }
.num { width: 119px; }
.off {
  background-color: #fafafa;
  color: #767676;
}
.bold-b {
  margin: 0 12px 0 4px;
  font-size: 22px;
  font-weight: 500;
}
.styles {
  display: flex;
  gap: 8px;
}
.aligns {
  display: flex;
  gap: 11px;
  padding-right: 1px;
}
.sbtn, .abtn {
  display: flex;
  align-items: center;
  justify-content: center;
  border: 2px solid #cccccc;
  border-radius: 6px;
  background-color: #fff;
}
.sbtn {
  width: 76.7px;
  height: 46px;
  margin-top: 3px;
  padding-bottom: 3px;
}
.sbtn svg {
  width: 22px;
  height: 22px;
  stroke: #222;
  stroke-width: 1.700;
}
.sbtn s {
  font-size: 13px;
  color: #222;
}
.abtn {
  width: 53px;
  height: 43px;
  padding-bottom: 3px;
}
.abtn svg {
  width: 22px;
  height: 20px;
}
.abtn.on {
  background-color: #c9c9c9;
  border-color: #adadad;
}
.t-text {
  margin: 2px 14px 0 0;
}
.toggle {
  width: 71px;
  height: 36px;
  padding: 6px;
  border: 2px solid #605e5c;
  border-radius: 18px;
  background-color: #fff;
}
.toggle::before {
  content: "";
  display: block;
  width: 21px;
  height: 21px;
  border-radius: 50%;
  background-color: #605e5c;
}
.toggle.on {
  border-color: #6c2c70;
  background-color: #6c2c70;
}
.toggle.on::before {
  margin-left: auto;
  background-color: #fff;
}
hr {
  height: 2px;
  margin: 14px -22px 14px -21px;
  border: none;
  background-color: #cdcdcd;
}
.pair {
  height: 81px;
  margin-right: -7px;
  align-items: flex-start;
  padding-top: 7px;
  gap: 8px;
}
.pair .cell {
  text-align: center;
}
.pair label {
  padding-top: 9px;
}
.pair small {
  display: block;
  padding-top: 4px;
  font-size: 17.3px;
  line-height: 24px;
}
.p-scroll {
  position: absolute;
  right: -5px;
  top: 6px;
  width: 12px;
  height: 479px;
  border-radius: 5px;
  background-color: #a9a9a9;
}
```
